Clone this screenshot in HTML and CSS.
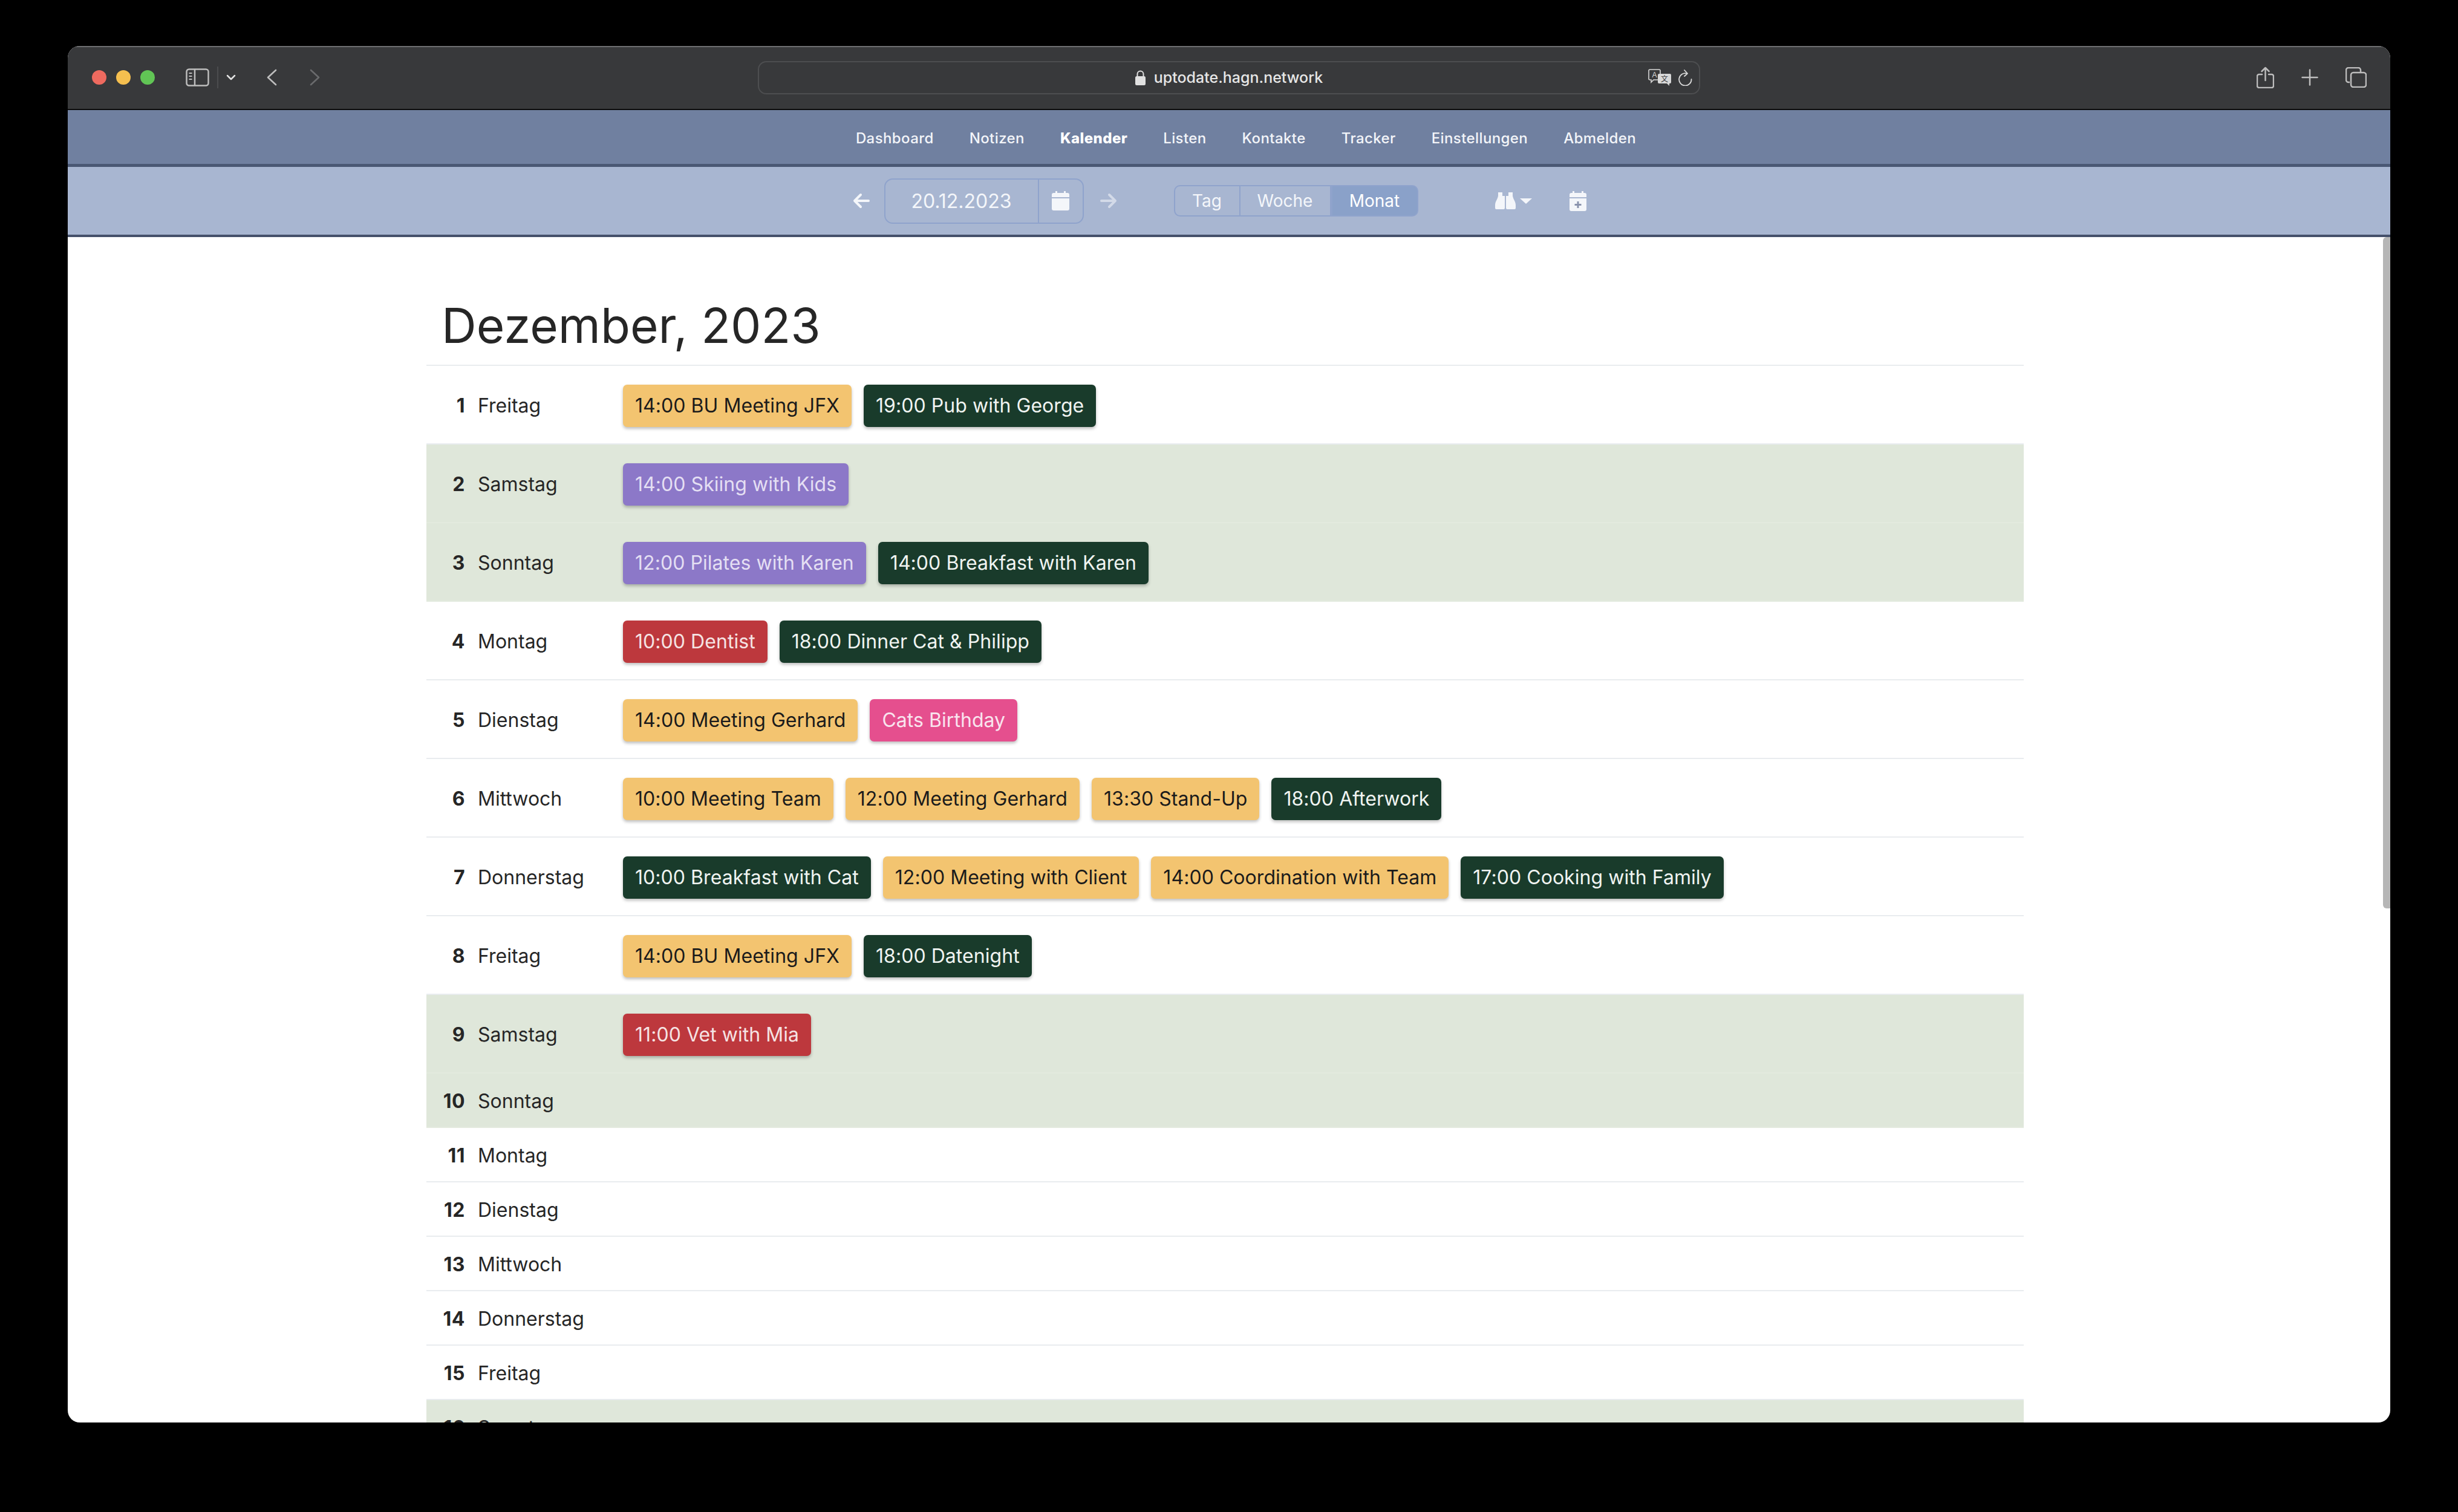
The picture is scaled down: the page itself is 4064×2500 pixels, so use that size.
FILE: index.html
```html
<!DOCTYPE html>
<html lang="de">
<head>
  <meta charset="UTF-8" />
  <title>Kalender | upToDate</title>
  <link rel="stylesheet" href="styles.css">
</head>
<body>
  <div class="window">
    <header class="toolbar">
      <div class="lights">
        <span class="light red"></span>
        <span class="light yellow"></span>
        <span class="light green"></span>
      </div>
      <svg class="tb-sidebar" width="39" height="30" viewBox="0 0 39 30" fill="none" stroke="#bdbdbd" stroke-width="2.5">
        <rect x="1.5" y="1.5" width="36" height="27" rx="4"/>
        <path d="M15 2v26"/>
        <path d="M5.5 8h5M5.5 13h5M5.5 18h5" stroke-width="2"/>
      </svg>
      <span class="tb-sep"></span>
      <svg class="tb-chevron" width="16" height="10" viewBox="0 0 16 10" fill="none" stroke="#e2e2e2" stroke-width="2.5" stroke-linecap="round" stroke-linejoin="round">
        <path d="M2 2l6 6 6-6"/>
      </svg>
      <svg class="tb-back" width="17" height="28" viewBox="0 0 17 28" fill="none" stroke="#bdbdbd" stroke-width="2.6" stroke-linecap="round" stroke-linejoin="round">
        <path d="M15 2L2 14l13 12"/>
      </svg>
      <svg class="tb-forward" width="17" height="28" viewBox="0 0 17 28" fill="none" stroke="#6a6b6d" stroke-width="2.6" stroke-linecap="round" stroke-linejoin="round">
        <path d="M2 2l13 12L2 26"/>
      </svg>

      <div class="urlbar">
        <span></span>
        <div class="url">
          <svg width="17" height="25" viewBox="0 0 17 25">
            <path d="M3.5 11V6.5a5 5 0 0 1 10 0V11" fill="none" stroke="#e0e0e0" stroke-width="2"/>
            <rect x="0" y="10" width="17" height="15" rx="2.5" fill="#e0e0e0"/>
          </svg>
          <span>uptodate.hagn.network</span>
        </div>
        <div class="url-tools">
          <svg width="38" height="28" viewBox="0 0 38 28">
            <path d="M3 1h15a2 2 0 0 1 2 2v13a2 2 0 0 1-2 2H9l-4 4v-4H3a2 2 0 0 1-2-2V3a2 2 0 0 1 2-2z" fill="#38393b" stroke="#d8d8d8" stroke-width="1.6"/>
            <text x="10.5" y="14" class="tr-a">A</text>
            <path d="M18 8h18a2 2 0 0 1 2 2v12a2 2 0 0 1-2 2h-1v4l-4-4H18a2 2 0 0 1-2-2V10a2 2 0 0 1 2-2z" fill="#d8d8d8"/>
            <text x="27" y="21" class="tr-b">文</text>
          </svg>
          <svg width="23" height="27" viewBox="0 0 23 27" fill="none" stroke="#d8d8d8" stroke-width="1.8" stroke-linecap="round" stroke-linejoin="round">
            <path d="M14 6.5A10.2 10.2 0 1 0 21.5 16"/>
            <path d="M10 1l5 5.5-5 4.5"/>
          </svg>
        </div>
      </div>

      <div class="tb-right">
        <svg width="29" height="36" viewBox="0 0 29 36" fill="none" stroke="#bdbdbd" stroke-width="2.5" stroke-linecap="round" stroke-linejoin="round">
          <path d="M9 13H4a3 3 0 0 0-3 3v16a3 3 0 0 0 3 3h21a3 3 0 0 0 3-3V16a3 3 0 0 0-3-3h-5"/>
          <path d="M14.5 23V2M8.5 8l6-6 6 6"/>
        </svg>
        <svg width="28" height="28" viewBox="0 0 28 28" stroke="#bdbdbd" stroke-width="2.5" stroke-linecap="round">
          <path d="M14 1.5v25M1.5 14h25"/>
        </svg>
        <svg width="35" height="34" viewBox="0 0 35 34" fill="none" stroke="#bdbdbd" stroke-width="2.5">
          <path d="M7 25H5a4 4 0 0 1-4-4V5a4 4 0 0 1 4-4h16a4 4 0 0 1 4 4v3"/>
          <rect x="9" y="9" width="25" height="24" rx="4"/>
        </svg>
      </div>
    </header>

    <nav class="mainnav">
      <a href="#">Dashboard</a>
      <a href="#">Notizen</a>
      <a href="#" class="active">Kalender</a>
      <a href="#">Listen</a>
      <a href="#">Kontakte</a>
      <a href="#">Tracker</a>
      <a href="#">Einstellungen</a>
      <a href="#">Abmelden</a>
    </nav>

    <div class="subnav">
      <svg class="arrow" width="28" height="26" viewBox="0 0 28 26" fill="none" stroke="#f4f6fa" stroke-width="4" stroke-linecap="round" stroke-linejoin="round">
        <path d="M26 13H3M13 3L3 13l10 10"/>
      </svg>
      <div class="date-group">
        <span class="date-value">20.12.2023</span>
        <span class="date-btn">
          <svg width="29" height="32" viewBox="0 0 29 32" fill="#f4f6fa">
            <path d="M6 0h3v3h11V0h3v3h3a3 3 0 0 1 3 3v4H0V6a3 3 0 0 1 3-3h3z"/>
            <path d="M0 12h29v17a3 3 0 0 1-3 3H3a3 3 0 0 1-3-3z"/>
          </svg>
        </span>
      </div>
      <svg class="arrow arrow-next" width="28" height="26" viewBox="0 0 28 26" fill="none" stroke="#d3dae8" stroke-width="4" stroke-linecap="round" stroke-linejoin="round">
        <path d="M2 13h23M15 3l10 10-10 10"/>
      </svg>

      <div class="view-group">
        <a href="#" class="view-day">Tag</a>
        <a href="#" class="view-week">Woche</a>
        <a href="#" class="view-month active">Monat</a>
      </div>

      <div class="search-drop">
        <svg width="34" height="28" viewBox="0 0 34 28" fill="#f4f6fa">
          <path d="M5 0h7v6h4v20a2 2 0 0 1-2 2H2a2 2 0 0 1-2-2v-5C0 15 4 12 5 6z"/>
          <path d="M22 0h7v6c1 6 5 9 5 15v5a2 2 0 0 1-2 2H20a2 2 0 0 1-2-2V6h4z"/>
        </svg>
        <span class="caret"></span>
      </div>

      <svg class="cal-add" width="28" height="33" viewBox="0 0 28 33">
        <path fill="#f4f6fa" d="M5 0h3v3h12V0h3v3h2a3 3 0 0 1 3 3v4H0V6a3 3 0 0 1 3-3h2z"/>
        <path fill="#f4f6fa" d="M0 12h28v18a3 3 0 0 1-3 3H3a3 3 0 0 1-3-3z"/>
        <path d="M14 17v11M8.5 22.5h11" stroke="#8a93ad" stroke-width="3"/>
      </svg>
    </div>

    <main class="content">
      <div class="container">
        <h1>Dezember, 2023</h1>
        <div class="days">
          <div class="day">
            <span class="num">1</span><span class="name">Freitag</span>
            <div class="events">
              <a class="badge work">14:00 BU Meeting JFX</a>
              <a class="badge private">19:00 Pub with George</a>
            </div>
          </div>
          <div class="day weekend">
            <span class="num">2</span><span class="name">Samstag</span>
            <div class="events">
              <a class="badge sport">14:00 Skiing with Kids</a>
            </div>
          </div>
          <div class="day weekend">
            <span class="num">3</span><span class="name">Sonntag</span>
            <div class="events">
              <a class="badge sport">12:00 Pilates with Karen</a>
              <a class="badge private">14:00 Breakfast with Karen</a>
            </div>
          </div>
          <div class="day">
            <span class="num">4</span><span class="name">Montag</span>
            <div class="events">
              <a class="badge health">10:00 Dentist</a>
              <a class="badge private">18:00 Dinner Cat &amp; Philipp</a>
            </div>
          </div>
          <div class="day">
            <span class="num">5</span><span class="name">Dienstag</span>
            <div class="events">
              <a class="badge work">14:00 Meeting Gerhard</a>
              <a class="badge birthday">Cats Birthday</a>
            </div>
          </div>
          <div class="day">
            <span class="num">6</span><span class="name">Mittwoch</span>
            <div class="events">
              <a class="badge work">10:00 Meeting Team</a>
              <a class="badge work">12:00 Meeting Gerhard</a>
              <a class="badge work">13:30 Stand-Up</a>
              <a class="badge private">18:00 Afterwork</a>
            </div>
          </div>
          <div class="day">
            <span class="num">7</span><span class="name">Donnerstag</span>
            <div class="events">
              <a class="badge private">10:00 Breakfast with Cat</a>
              <a class="badge work">12:00 Meeting with Client</a>
              <a class="badge work">14:00 Coordination with Team</a>
              <a class="badge private">17:00 Cooking with Family</a>
            </div>
          </div>
          <div class="day">
            <span class="num">8</span><span class="name">Freitag</span>
            <div class="events">
              <a class="badge work">14:00 BU Meeting JFX</a>
              <a class="badge private">18:00 Datenight</a>
            </div>
          </div>
          <div class="day weekend">
            <span class="num">9</span><span class="name">Samstag</span>
            <div class="events">
              <a class="badge health">11:00 Vet with Mia</a>
            </div>
          </div>
          <div class="day weekend empty"><span class="num">10</span><span class="name">Sonntag</span></div>
          <div class="day empty"><span class="num">11</span><span class="name">Montag</span></div>
          <div class="day empty"><span class="num">12</span><span class="name">Dienstag</span></div>
          <div class="day empty"><span class="num">13</span><span class="name">Mittwoch</span></div>
          <div class="day empty"><span class="num">14</span><span class="name">Donnerstag</span></div>
          <div class="day empty"><span class="num">15</span><span class="name">Freitag</span></div>
          <div class="day weekend empty"><span class="num">16</span><span class="name">Samstag</span></div>
        </div>
      </div>
      <div class="scroll-thumb"></div>
    </main>
  </div>
</body>
</html>
```

FILE: styles.css
```css
html, body {
  margin: 0;
  height: 2500px;
  background: #000;
  overflow: hidden;
}
body {
  padding: 76px 112px 148px;
  box-sizing: border-box;
  font-family: Inter, "Liberation Sans", sans-serif;
  color: #262626;
}
svg {
  display: block;
  flex: none;
}
a {
  text-decoration: none;
}

.window {
  height: 100%;
  display: flex;
  flex-direction: column;
  background: #fff;
  border-radius: 20px;
  overflow: hidden;
}

/* browser chrome */
.toolbar {
  height: 106px;
  box-sizing: border-box;
  display: flex;
  align-items: center;
  padding: 0 39px 2px 40px;
  background: #38393b;
  border-top: 2px solid #6e6f71;
  border-bottom: 2px solid #0c0c0c;
}
.lights {
  display: flex;
  gap: 16px;
}
.light {
  width: 24px;
  height: 24px;
  border-radius: 50%;
}
.light.red { background: #ee6a5f; }
.light.yellow { background: #f5bf4f; }
.light.green { background: #61c555; }
.tb-sidebar { margin-left: 51px; }
.tb-sep {
  width: 2px;
  height: 36px;
  margin-left: 13px;
  background: #4b4c4e;
}
.tb-chevron { margin-left: 13px; }
.tb-back { margin-left: 51px; }
.tb-forward { margin-left: 54px; }
.urlbar {
  width: 1558px;
  height: 55px;
  box-sizing: border-box;
  margin-left: 724px;
  display: grid;
  grid-template-columns: 1fr auto 1fr;
  align-items: center;
  border: 2px solid #4d4e50;
  border-radius: 14px;
}
.url {
  display: flex;
  align-items: center;
  gap: 14px;
  font-size: 25px;
  font-weight: 500;
  color: #e6e6e6;
}
.url-tools {
  display: flex;
  justify-content: flex-end;
  align-items: center;
  gap: 12px;
  padding-right: 11px;
}
.tr-a {
  font: 12px "Liberation Sans", sans-serif;
  fill: #d8d8d8;
  text-anchor: middle;
}
.tr-b {
  font: 12px "Noto Sans CJK SC", sans-serif;
  fill: #38393b;
  text-anchor: middle;
}
.tb-right {
  margin-left: auto;
  display: flex;
  align-items: center;
  gap: 45px;
}

/* site navigation */
.mainnav {
  height: 94px;
  box-sizing: border-box;
  flex: none;
  display: flex;
  justify-content: center;
  align-items: center;
  gap: 59px;
  padding: 4px 0 0 56px;
  background: #7080a0;
  border-bottom: 5px solid #4a5874;
}
.mainnav a {
  color: #f3f5f9;
  font-size: 24px;
  font-weight: 500;
  letter-spacing: 0.4px;
}
.mainnav a.active {
  font-weight: 800;
  color: #fff;
}

.subnav {
  height: 116px;
  box-sizing: border-box;
  flex: none;
  display: flex;
  justify-content: center;
  align-items: center;
  padding-right: 32px;
  background: #a8b6d1;
  border-bottom: 4px solid #45506a;
  color: #f4f6fa;
}
.date-group {
  width: 330px;
  height: 75px;
  box-sizing: border-box;
  margin: 0 27px 0 24px;
  display: flex;
  border: 2px solid #8fa3cc;
  border-radius: 14px;
}
.date-value {
  flex: 1;
  display: flex;
  justify-content: center;
  align-items: center;
  font-size: 32px;
}
.date-btn {
  width: 74px;
  box-sizing: border-box;
  display: flex;
  justify-content: center;
  align-items: center;
  border-left: 2px solid #8fa3cc;
}
.view-group {
  height: 52px;
  margin-left: 94px;
  display: flex;
  font-size: 28px;
}
.view-group a {
  display: flex;
  align-items: center;
  justify-content: center;
  box-sizing: border-box;
  color: #f4f6fa;
  border: 2px solid #8fa3cc;
}
.view-day {
  width: 110px;
  border-radius: 10px 0 0 10px;
}
.view-week {
  width: 150px;
  border-left: 0 !important;
}
.view-month {
  width: 144px;
  border-radius: 0 10px 10px 0;
}
.view-group a.active {
  background: #8aa1c9;
  color: #fff;
}
.search-drop {
  margin-left: 127px;
  display: flex;
  align-items: center;
  gap: 7px;
}
.caret {
  width: 0;
  height: 0;
  border-top: 9px solid #f4f6fa;
  border-left: 10px solid transparent;
  border-right: 10px solid transparent;
}
.cal-add {
  margin-left: 62px;
}

/* month list */
.content {
  flex: 1;
  min-height: 0;
  position: relative;
  overflow: hidden;
  padding-right: 13px;
}
.container {
  width: 2641px;
  margin: 0 auto;
}
h1 {
  margin: 98px 0 17px;
  padding-left: 25px;
  font-size: 80px;
  line-height: 96px;
  font-weight: 400;
  color: #262626;
}
.days {
  border-top: 2px solid #e9ecef;
}
.day {
  height: 130px;
  box-sizing: border-box;
  display: flex;
  align-items: center;
  padding-top: 3px;
  font-size: 32px;
  border-bottom: 2px solid #e9ecef;
}
.day.empty {
  height: 90px;
}
.day.weekend {
  background: #dfe7da;
  border-bottom-color: #e3eade;
}
.num {
  width: 64px;
  text-align: right;
  font-weight: 700;
  letter-spacing: 0.5px;
}
.name {
  width: 240px;
  margin-left: 21px;
  flex: none;
}
.events {
  display: flex;
  gap: 20px;
}
.badge {
  height: 70px;
  padding: 0 20px;
  display: flex;
  align-items: center;
  border-radius: 7px;
  letter-spacing: 0.05px;
  box-shadow: 0 3px 5px rgba(0, 0, 0, 0.25);
}
.badge.work {
  background: #f3c470;
  color: #1b1b1b;
}
.badge.private {
  background: #193b2b;
  color: #f0f4f1;
}
.badge.sport {
  background: #8c78c8;
  color: #e4dff3;
}
.badge.health {
  background: #bd383d;
  color: #f5e3e3;
}
.badge.birthday {
  background: #e54f8e;
  color: #f9e4ee;
}
.scroll-thumb {
  position: absolute;
  top: 0;
  right: 0;
  width: 12px;
  height: 1110px;
  background: #b6b6b6;
  border-radius: 6px 0 0 6px;
}
```
